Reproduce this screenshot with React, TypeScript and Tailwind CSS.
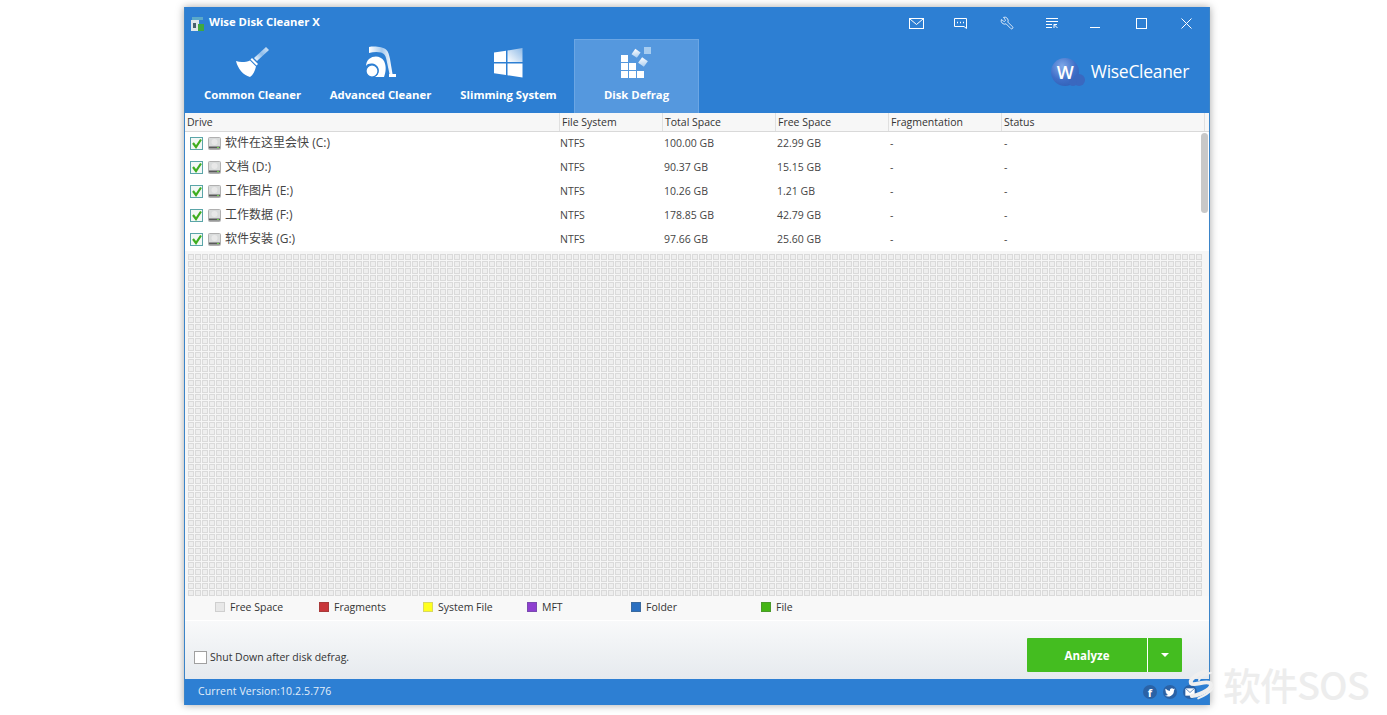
import { Wrench } from "lucide-react";

const columns = [
  { name: "Drive", width: "w-[375px]" },
  { name: "File System", width: "w-[103px]" },
  { name: "Total Space", width: "w-[113px]" },
  { name: "Free Space", width: "w-[113px]" },
  { name: "Fragmentation", width: "w-[113px]" },
  { name: "Status", width: "w-[203px]" },
];

const drives = [
  { name: "软件在这里会快", letter: "(C:)", total: "100.00 GB", free: "22.99 GB" },
  { name: "文档", letter: "(D:)", total: "90.37 GB", free: "15.15 GB" },
  { name: "工作图片", letter: "(E:)", total: "10.26 GB", free: "1.21 GB" },
  { name: "工作数据", letter: "(F:)", total: "178.85 GB", free: "42.79 GB" },
  { name: "软件安装", letter: "(G:)", total: "97.66 GB", free: "25.60 GB" },
];

const legend = [
  { name: "Free Space", color: "bg-[#e8e8e8] border-[#cfcfcf]", width: "w-[104px]" },
  { name: "Fragments", color: "bg-[#c9363a] border-[#a83a3a]", width: "w-[104px]" },
  { name: "System File", color: "bg-[#ffff1e] border-[#d8d860]", width: "w-[104px]" },
  { name: "MFT", color: "bg-[#8e3fd0] border-[#7a4ab0]", width: "w-[104px]" },
  { name: "Folder", color: "bg-[#2a6fc0] border-[#3a6a9f]", width: "w-[130px]" },
  { name: "File", color: "bg-[#45b515] border-[#4a9a2a]", width: "w-[104px]" },
];

const cells = Array.from({ length: 145 * 49 });

function BroomIcon() {
  return (
    <svg width="34" height="32" viewBox="0 0 34 32">
      <defs>
        <linearGradient id="broomHandle" x1="1" y1="0" x2="0" y2="1">
          <stop offset="0" stopColor="#d5e6f7" />
          <stop offset="0.5" stopColor="#8fbdea" />
          <stop offset="1" stopColor="#ffffff" />
        </linearGradient>
      </defs>
      <path d="M30 1 L33 4 L21 15 L18 12 Z" fill="url(#broomHandle)" />
      <path d="M16 12 L22 18 L20.500 19.500 L14.500 13.500 Z" fill="#fff" />
      <path d="M0 15 C5 17 10 16 14 14.500 L20 20.500 C19 25 17 29 14 31 C7 29 2 23 0 15 Z" fill="#fff" />
    </svg>
  );
}

function VacuumIcon() {
  return (
    <svg width="32" height="32" viewBox="0 0 32 32">
      <defs>
        <linearGradient id="vacHose" x1="0" y1="0" x2="1" y2="0">
          <stop offset="0" stopColor="#ffffff" />
          <stop offset="0.55" stopColor="#a6caee" />
          <stop offset="1" stopColor="#ffffff" />
        </linearGradient>
      </defs>
      <path d="M4 1 C10 0 18 1 21 3.500 C23.500 5.500 24 9 25 13 L27.500 28 L24.500 28 L21.500 14 C20.500 9 19 7.500 16 6.500 C12 5.500 8 6 4 7 Z" fill="url(#vacHose)" />
      <path d="M24 28 H31 V31 H24 Z" fill="#fff" />
      <path d="M4 13 C9 9 16 10 19 15 C21.500 20 21 26 19 31 L8 31 C14 31 16 22 11 19 C8 17 3 17 1 20 C1 17.500 2 15 4 13 Z" fill="#fff" />
      <circle cx="7" cy="25" r="6" fill="#fff" stroke="#2d7fd3" strokeWidth="1.200" />
    </svg>
  );
}

function WindowsIcon() {
  return (
    <svg width="29" height="30" viewBox="0 0 29 30">
      <defs>
        <linearGradient id="winPane" x1="1" y1="0" x2="0" y2="1">
          <stop offset="0" stopColor="#8db9e6" />
          <stop offset="1" stopColor="#ffffff" />
        </linearGradient>
      </defs>
      <path d="M0 4.500 L12 2.700 V14 H0 Z" fill="#fff" />
      <path d="M13.500 2.500 L28.500 0 V14 H13.500 Z" fill="url(#winPane)" />
      <path d="M0 15.500 H12 V27 L0 25.300 Z" fill="#fff" />
      <path d="M13.500 15.500 H28.500 V29.500 L13.500 27.300 Z" fill="#fff" />
    </svg>
  );
}

function DefragIcon() {
  const blocks = [
    [0, 8], [0, 16], [8, 16], [0, 24], [8, 24], [16, 24],
  ];
  return (
    <svg width="31" height="31" viewBox="0 0 31 31">
      <defs>
        <linearGradient id="defragA" x1="0" y1="0" x2="1" y2="1">
          <stop offset="0" stopColor="#ffffff" />
          <stop offset="1" stopColor="#a9cdf0" />
        </linearGradient>
      </defs>
      {blocks.map(([x, y]) => (
        <rect key={`${x}-${y}`} x={x} y={y} width="7" height="7" fill="#fff" />
      ))}
      <rect x="12" y="3" width="6.500" height="6.500" fill="url(#defragA)" transform="rotate(35 15 6)" />
      <rect x="23" y="0" width="7" height="7" fill="#a6ccf0" />
      <rect x="18.500" y="11.500" width="7" height="7" fill="url(#defragA)" transform="rotate(35 22 15)" />
    </svg>
  );
}

const tabs = [
  { name: "Common Cleaner", icon: <BroomIcon /> },
  { name: "Advanced Cleaner", icon: <VacuumIcon /> },
  { name: "Slimming System", icon: <WindowsIcon /> },
  { name: "Disk Defrag", icon: <DefragIcon />, active: true },
];

function WindowIcons() {
  return (
    <div className="flex items-center text-white">
      <svg className="mr-[30px]" width="15" height="11" viewBox="0 0 15 11" fill="none" stroke="#fff">
        <rect x="0.500" y="0.500" width="14" height="10" />
        <path d="M1 1 L7.500 6.500 L14 1" />
      </svg>
      <svg className="mr-[33px]" width="13" height="11" viewBox="0 0 13 11" fill="none" stroke="#fff">
        <path d="M0.500 0.500 H12.500 V10.500 L10 8.500 H0.500 Z" />
        <path d="M3 4.500 H4 M6 4.500 H7 M9 4.500 H10" strokeWidth="1.500" />
      </svg>
      <Wrench className="mr-[32px] -scale-x-100" size={14} strokeWidth={1.4} />
      <svg className="mr-[32px]" width="12" height="11" viewBox="0 0 12 11" fill="none" stroke="#fff">
        <path d="M0 0.500 H12 M0 3.500 H12 M0 6.500 H6 M0 9.500 H6" />
        <path d="M8 6.500 V10 M8 6.500 H11 M8 6.500 L11.500 10" />
      </svg>
      <div className="mr-[36px] mt-[9px] h-px w-[10px] bg-white" />
      <div className="mr-[34px] h-[11px] w-[11px] border border-white" />
      <svg width="11" height="11" viewBox="0 0 11 11" stroke="#fff">
        <path d="M0.500 0.500 L10.500 10.500 M10.500 0.500 L0.500 10.500" />
      </svg>
    </div>
  );
}

function WiseLogo() {
  return (
    <svg width="35" height="30" viewBox="0 0 35 30">
      <defs>
        <radialGradient id="wiseBall" cx="0.4" cy="0.3" r="0.8">
          <stop offset="0" stopColor="#7fa8e8" />
          <stop offset="0.6" stopColor="#3f6fc8" />
          <stop offset="1" stopColor="#2f5fb5" />
        </radialGradient>
      </defs>
      <circle cx="14" cy="15" r="14" fill="url(#wiseBall)" />
      <circle cx="28" cy="23" r="6" fill="#3a68bf" />
      <circle cx="22" cy="25" r="4" fill="#3a68bf" />
    </svg>
  );
}

function DriveCheck() {
  return (
    <svg width="13" height="13" viewBox="0 0 13 13">
      <rect x="0.500" y="0.500" width="12" height="12" fill="#f3f8f6" stroke="#5aa5a8" />
      <path d="M3 6 L6 10 L11 2.500" fill="none" stroke="#3fae1f" strokeWidth="2.200" />
    </svg>
  );
}

function DriveIcon() {
  return (
    <svg width="13" height="13" viewBox="0 0 13 13">
      <rect x="0.500" y="0.500" width="12" height="12" rx="1" fill="#d9dbdb" stroke="#b0b0b0" />
      <circle cx="6.500" cy="5" r="3" fill="#e8e8e8" />
      <rect x="1" y="9.500" width="11" height="2" fill="#5a5a5a" />
      <rect x="9" y="10" width="2" height="1" fill="#6fd04a" />
    </svg>
  );
}

function SocialIcons() {
  return (
    <div className="flex items-center gap-[6px]">
      <div className="flex h-[14px] w-[14px] items-center justify-center rounded-full bg-[#2a62a6] text-[11px] leading-none font-bold text-white">
        f
      </div>
      <div className="flex h-[14px] w-[14px] items-center justify-center rounded-full bg-[#2a62a6]">
        <svg width="10" height="9" viewBox="0 0 24 20" fill="#fff">
          <path d="M24 2.400 A10 10 0 0 1 21.200 3.200 A5 5 0 0 0 23.300 0.500 A10 10 0 0 1 20.200 1.700 A4.900 4.900 0 0 0 11.800 6.200 A14 14 0 0 1 1.700 1 A4.900 4.900 0 0 0 3.200 7.600 A4.900 4.900 0 0 1 1 7 A4.900 4.900 0 0 0 4.900 11.800 A5 5 0 0 1 2.700 11.900 A4.900 4.900 0 0 0 7.300 15.300 A10 10 0 0 1 0 17.300 A14 14 0 0 0 21.500 5 A10 10 0 0 0 24 2.400 Z" />
        </svg>
      </div>
      <div className="flex h-[14px] w-[14px] items-center justify-center rounded-full bg-[#2a62a6]">
        <svg width="10" height="8" viewBox="0 0 10 8" fill="#fff" stroke="#2a62a6" strokeWidth="0.700">
          <rect x="0" y="0" width="10" height="8" />
          <path d="M0 0 L5 4.500 L10 0" fill="none" />
        </svg>
      </div>
    </div>
  );
}

export default function App() {
  return (
    <div className="relative h-[715px] overflow-hidden bg-white pt-[7px] pl-[184px] font-['Open_Sans','Noto_Sans_CJK_SC',sans-serif] text-[10.5px] text-[#333]">
      <div className="flex h-[698px] w-[1026px] flex-col border-x border-[#3b84c8] bg-white shadow-[0_0_8px_rgba(0,0,0,0.35)]">
        <header className="h-[106px] shrink-0 bg-[#2d7fd3] text-white">
          <div className="flex h-[32px] items-center pr-[17px] pl-[5px]">
            <svg width="15" height="15" viewBox="0 0 15 15">
              <rect x="1" y="4" width="8" height="11" fill="#dfe6ec" />
              <rect x="2" y="1" width="11" height="3" fill="#5aa9c9" />
              <rect x="3" y="7" width="3" height="5" fill="#46606f" />
              <rect x="8" y="8" width="6" height="7" fill="#3fa83f" />
            </svg>
            <span className="mb-[2px] ml-[4px] text-[11.300px] font-bold">Wise Disk Cleaner X</span>
            <div className="ml-auto">
              <WindowIcons />
            </div>
          </div>
          <div className="flex h-[74px] pl-[5px]">
            <nav className="flex gap-[3px]">
              {tabs.map((tab) => (
                <div
                  key={tab.name}
                  className={
                    tab.active
                      ? "flex w-[125px] flex-col items-center border-x border-t border-[#6ba6e4] bg-[#5598de]"
                      : "flex w-[125px] flex-col items-center border-x border-t border-transparent"
                  }
                >
                  <div className="flex h-[38px] items-end">{tab.icon}</div>
                  <span className="mt-[9px] text-[11.300px] leading-[15px] whitespace-nowrap font-bold">{tab.name}</span>
                </div>
              ))}
            </nav>
            <div className="mt-[17px] ml-auto flex h-[32px] items-center pr-[20px]">
              <div className="relative">
                <WiseLogo />
                <span className="absolute top-[5px] left-[6px] text-[18px] leading-[20px] font-semibold">
                  W
                </span>
              </div>
              <span className="ml-[5px] mb-[1px] text-[17.500px] tracking-[-0.3px]">WiseCleaner</span>
            </div>
          </div>
        </header>

        <div className="flex h-[19px] shrink-0 border-b border-[#d9d9d9] bg-[#f7f7f7]">
          {columns.map((col) => (
            <div key={col.name} className={`${col.width} border-r border-[#e0e0e0] pl-[2px] leading-[19px]`}>
              {col.name}
            </div>
          ))}
        </div>

        <div className="relative h-[119px] shrink-0 text-[#444]">
          <div className="-mt-px">
            {drives.map((drive) => (
              <div key={drive.name} className="flex h-[24px] items-center leading-[24px]">
                <div className="flex w-[375px] items-center pl-[5px]">
                  <DriveCheck />
                  <span className="ml-[5px]">
                    <DriveIcon />
                  </span>
                  <span className="ml-[4px] text-[12px]">
                    {drive.name} {drive.letter}
                  </span>
                </div>
                <div className="w-[104px]">NTFS</div>
                <div className="w-[113px]">{drive.total}</div>
                <div className="w-[113px]">{drive.free}</div>
                <div className="w-[113px]">-</div>
                <div className="pl-[1px]">-</div>
              </div>
            ))}
          </div>
          <div className="absolute top-px right-[1px] h-[80px] w-[7px] rounded-full bg-[#c8c8c8]" />
        </div>

        <div className="h-[345px] shrink-0 bg-[#f6f6f6] pt-[3px] pl-[3px]">
          <div className="grid w-[1014px] grid-cols-[repeat(145,6px)] grid-rows-[repeat(49,6px)] gap-px">
            {cells.map((_, i) => (
              <div key={i} className="border border-[#dadada] bg-[#eeeeee]" />
            ))}
          </div>
        </div>

        <div className="flex h-[25px] shrink-0 items-center border-b border-white bg-[#f8f8f8] pb-[2px] pl-[30px]">
          {legend.map((item) => (
            <div key={item.name} className={`flex ${item.width} items-center`}>
              <div className={`h-[10px] w-[10px] border ${item.color}`} />
              <span className="ml-[5px] pt-[2px]">{item.name}</span>
            </div>
          ))}
        </div>

        <div className="flex h-[58px] shrink-0 items-start bg-gradient-to-b from-[#f8f9fa] to-[#e6eaee] pr-[27px] pl-[9px]">
          <div className="mt-[30px] flex h-[13px] items-center">
            <div className="h-[13px] w-[13px] border border-[#a0a0a0] bg-white" />
            <span className="ml-[3px] leading-[13px]">Shut Down after disk defrag.</span>
          </div>
          <div className="mt-[17px] ml-auto flex h-[34px] w-[155px] rounded-[1px] bg-[#44bd20] text-white">
            <div className="flex w-[121px] items-center justify-center border-r border-white pt-[2px] text-[11.500px] font-bold">
              Analyze
            </div>
            <div className="flex flex-1 items-center justify-center">
              <div className="h-0 w-0 border-x-[4px] border-t-[4px] border-x-transparent border-t-white" />
            </div>
          </div>
        </div>

        <footer className="flex h-[26px] shrink-0 items-center justify-between bg-[#2d7fd3] pr-[12px] pl-[13px] text-[#e3eef9]">
          <span className="tracking-[0.12px]">Current Version:10.2.5.776</span>
          <SocialIcons />
        </footer>
      </div>

      <div className="absolute top-[665px] left-[1187px] flex items-center">
        <svg width="32" height="38" viewBox="0 0 40 40" fill="none" stroke="#efefef" strokeWidth="5" strokeLinecap="round">
          <path d="M24 4 C12 8 3 14 5 19 C8 23 24 15 29 19 C34 24 20 33 6 35" />
          <path d="M30 6 C22 8 16 12 15 15" strokeWidth="2.500" />
          <path d="M33 25 C28 31 21 35 14 38" strokeWidth="2.500" />
        </svg>
        <span className="ml-[4px] text-[38px] leading-none font-medium font-['Noto_Sans_CJK_SC',sans-serif] tracking-[-1px] text-[#ededed]">软件SOS</span>
      </div>
    </div>
  );
}
